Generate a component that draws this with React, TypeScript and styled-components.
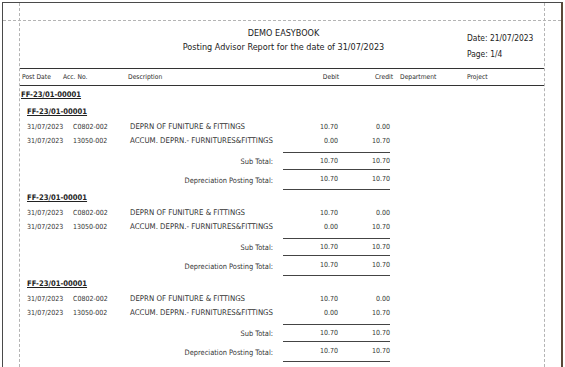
import React from 'react';
import styled, { createGlobalStyle } from 'styled-components';

interface Entry {
  date: string;
  acc: string;
  desc: string;
  debit: string;
  credit: string;
}

const GlobalStyle = createGlobalStyle`
  html, body {
    margin: 0;
    padding: 0;
    background: #fff;
  }
  body {
    font-family: "DejaVu Sans Condensed", "DejaVu Sans", sans-serif;
    color: #333;
    overflow: hidden;
  }
`;

const Page = styled.div`
  margin: 2px 0 0 2px;
  width: 558px;
  height: 364px;
  overflow: hidden;
  border: 1px solid #4a4a4a;
  border-right: 2px solid #5a4838;
  border-bottom: none;
`;

const Frame = styled.div`
  margin-left: 16px;
  width: 524px;
  height: 100%;
  border-left: 1px dashed #b4b4b4;
  border-right: 1px dashed #b4b4b4;
`;

const TopMargin = styled.div`
  height: 17px;
  margin: 0 -17px;
  border-bottom: 1px dashed #b4b4b4;
`;

const Header = styled.div`
  display: flex;
  height: 47px;
  border-bottom: 1px solid #333;
`;

const Titles = styled.div`
  flex: 1;
  padding: 5px 0 0 80px;
  text-align: center;
  font-size: 9px;
  line-height: 14px;
  color: #222;
`;

const Meta = styled.div`
  width: 77px;
  padding-top: 9px;
  font-size: 8.4px;
  line-height: 16px;
  color: #222;
`;

const ColumnHead = styled.div`
  display: grid;
  grid-template-columns: 41px 65px 161px 50px 54px 74px 1fr;
  padding-left: 2px;
  height: 16px;
  line-height: 16px;
  font-size: 6.7px;
  color: #2a2a2a;
  border-bottom: 1px solid #333;
`;

const Cell = styled.div<{ $right?: boolean; $pad?: number; $wide?: boolean }>`
  text-align: ${(p) => (p.$right ? 'right' : 'left')};
  padding-left: ${(p) => p.$pad ?? 0}px;
  font-size: ${(p) => (p.$wide ? '7.8px' : 'inherit')};
  white-space: nowrap;
`;

const DocNo = styled.div<{ $level: number }>`
  height: ${(p) => (p.$level === 1 ? 18 : 16)}px;
  line-height: ${(p) => (p.$level === 1 ? 18 : 16)}px;
  padding-left: ${(p) => (p.$level === 1 ? 1 : 7)}px;
  font-size: 7.6px;
  font-weight: bold;
  text-decoration: underline;
  color: #222;
`;

const Row = styled.div`
  display: grid;
  grid-template-columns: 46px 57px 153px 55px 52px;
  padding-left: 7px;
  height: 14px;
  line-height: 14px;
  font-size: 7px;
  color: #333;
`;

const TotalRow = styled.div<{ $gap?: number }>`
  display: grid;
  grid-template-columns: 263px 107px;
  margin-top: ${(p) => p.$gap ?? 0}px;
  font-size: 7px;
  color: #333;
`;

const TotalLabel = styled.div`
  align-self: center;
  text-align: right;
  padding-right: 10px;
  font-size: 7.4px;
`;

const Amounts = styled.div<{ $top?: boolean; $h: number }>`
  display: grid;
  grid-template-columns: 55px 52px;
  height: ${(p) => p.$h}px;
  line-height: ${(p) => p.$h}px;
  border-top: ${(p) => (p.$top ? '1px solid #444' : 'none')};
  border-bottom: 1px solid #444;
  text-align: right;
`;

const entries: Entry[] = [
  { date: '31/07/2023', acc: 'C0802-002', desc: 'DEPRN OF FUNITURE & FITTINGS', debit: '10.70', credit: '0.00' },
  { date: '31/07/2023', acc: '13050-002', desc: 'ACCUM. DEPRN.- FURNITURES&FITTINGS', debit: '0.00', credit: '10.70' },
];

const Group = () => (
  <>
    <DocNo $level={2}>FF-23/01-00001</DocNo>
    {entries.map((e, i) => (
      <Row key={i}>
        <Cell>{e.date}</Cell>
        <Cell>{e.acc}</Cell>
        <Cell $wide>{e.desc}</Cell>
        <Cell $right>{e.debit}</Cell>
        <Cell $right>{e.credit}</Cell>
      </Row>
    ))}
    <TotalRow $gap={4}>
      <TotalLabel>Sub Total:</TotalLabel>
      <Amounts $top $h={16}>
        <span>10.70</span>
        <span>10.70</span>
      </Amounts>
    </TotalRow>
    <TotalRow>
      <TotalLabel>Depreciation Posting Total:</TotalLabel>
      <Amounts $h={19}>
        <span>10.70</span>
        <span>10.70</span>
      </Amounts>
    </TotalRow>
  </>
);

export default function App() {
  return (
    <>
      <GlobalStyle />
      <Page>
        <Frame>
          <TopMargin />
          <Header>
            <Titles>
              <div>DEMO EASYBOOK</div>
              <div>Posting Advisor Report for the date of 31/07/2023</div>
            </Titles>
            <Meta>
              <div>Date: 21/07/2023</div>
              <div>Page: 1/4</div>
            </Meta>
          </Header>
          <ColumnHead>
            <Cell>Post Date</Cell>
            <Cell>Acc. No.</Cell>
            <Cell>Description</Cell>
            <Cell $right>Debit</Cell>
            <Cell $right>Credit</Cell>
            <Cell $pad={7}>Department</Cell>
            <Cell>Project</Cell>
          </ColumnHead>
          <DocNo $level={1}>FF-23/01-00001</DocNo>
          <Group />
          <Group />
          <Group />
        </Frame>
      </Page>
    </>
  );
}
